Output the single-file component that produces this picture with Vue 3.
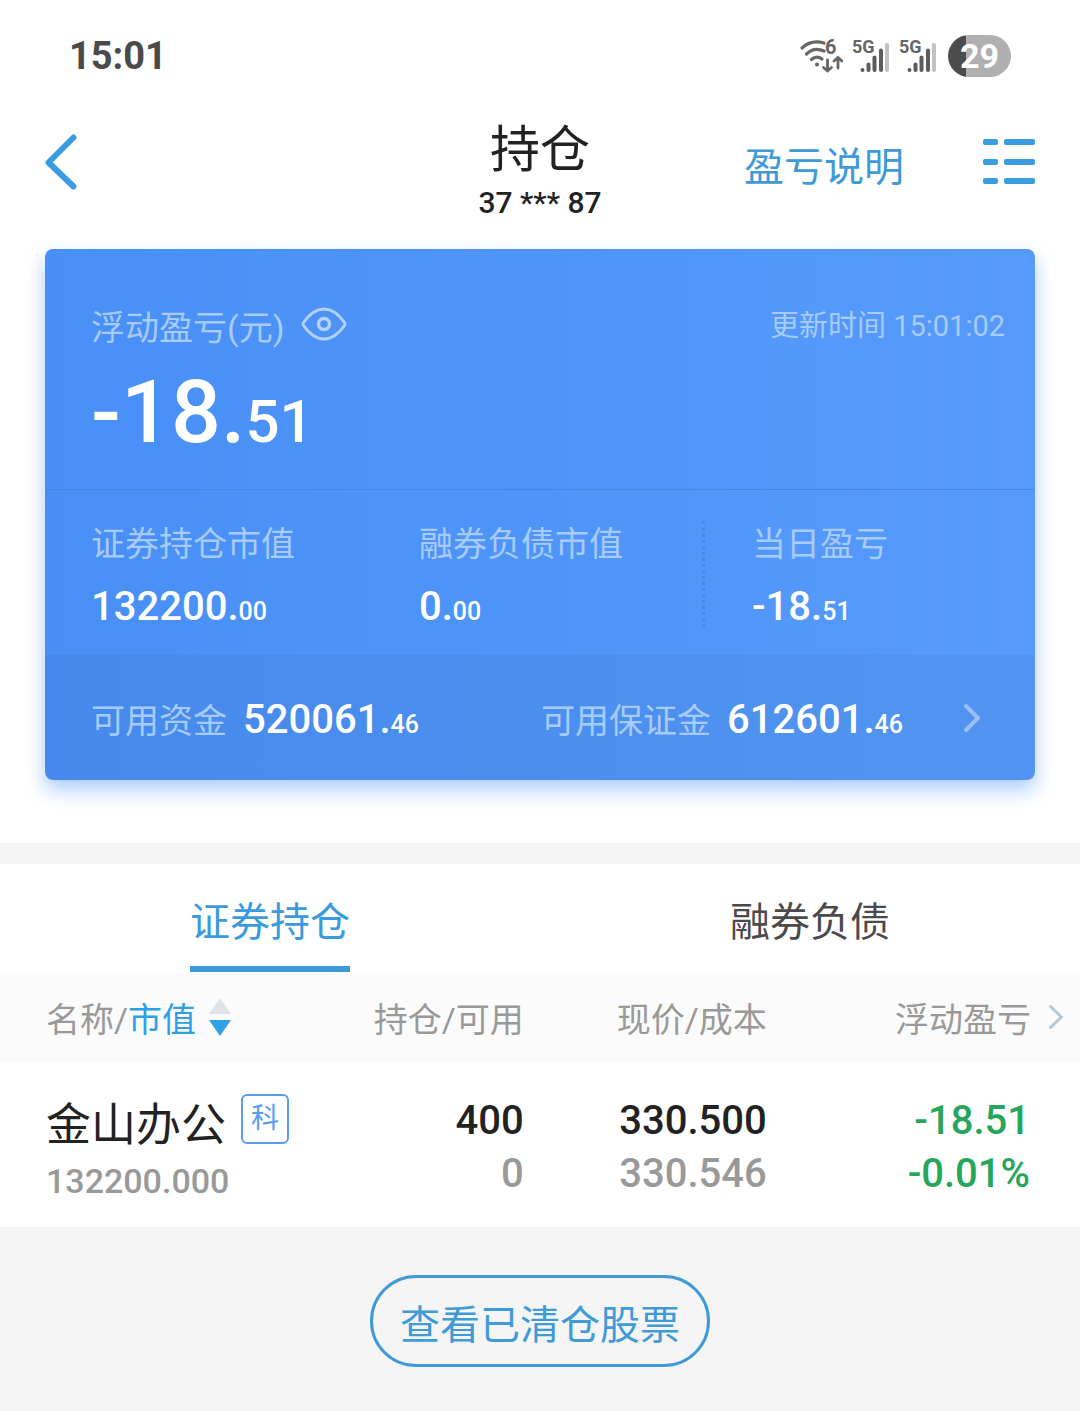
<template>
  <div class="page">
    <!-- Status bar -->
    <div class="status-bar">
      <span class="clock">15:01</span>
      <div class="status-icons">
        <svg viewBox="0 -6 44 50" width="44" height="50" aria-hidden="true">
          <g fill="none" stroke="#666" stroke-width="3.200" stroke-linecap="round">
            <path d="M3 11Q12 2.500 25 6" />
            <path d="M7.500 17Q15 9.500 25 14" />
            <path d="M12.500 22.500Q17.500 18 23 22" />
            <path d="M28.500 23V34M24.500 30.500L28.500 34L32.500 30.500" stroke-width="2.800" />
            <path d="M39 31V20.500M35 24L39 20.500L43 24" stroke-width="2.800" />
          </g>
          <circle cx="18" cy="27.500" r="2" fill="#666" />
          <text x="26" y="17" class="wifi-text">6</text>
        </svg>
        <svg
          v-for="n in 2"
          :key="n"
          viewBox="0 -6 38 48"
          width="38"
          height="48"
          aria-hidden="true"
        >
          <text x="0" y="15" class="signal-text">5G</text>
          <g stroke="#5c5c5c" stroke-width="4" stroke-linecap="round">
            <path d="M10.500 32V32.100M16.500 32V26.500M22.500 32V19.500M29 32V12.500" />
            <path d="M35 32V7" stroke="#c2c2c2" />
          </g>
        </svg>
        <span class="battery">29</span>
      </div>
    </div>

    <!-- Title bar -->
    <header class="title-bar">
      <button type="button" class="icon-button" aria-label="返回">
        <svg viewBox="0 0 32 56" width="32" height="56">
          <path d="M28.500 3.500L3.500 28.500L28.500 52.500" fill="none" stroke="#3a9de0" stroke-width="6" stroke-linecap="round" stroke-linejoin="round" />
        </svg>
      </button>
      <div class="title">
        <h1>持仓</h1>
        <p>37 *** 87</p>
      </div>
      <div class="title-actions">
        <a href="#" class="help-link">盈亏说明</a>
        <button type="button" class="icon-button" aria-label="菜单">
          <svg viewBox="0 0 52 48" width="52" height="48" fill="#3a9de0">
            <g v-for="y in [1, 21, 40]" :key="y">
              <rect x="0" :y="y" width="15" height="6" rx="2" />
              <rect x="21" :y="y" width="31" height="6" rx="2" />
            </g>
          </svg>
        </button>
      </div>
    </header>

    <!-- Summary card -->
    <main class="summary">
      <section class="card">
        <div class="card-top">
          <div class="card-head">
            <span class="label">浮动盈亏(元)</span>
            <button type="button" class="eye" aria-label="隐藏金额">
              <svg viewBox="0 0 46 34" width="46" height="34" fill="none" stroke="#b4d2fd" stroke-width="3">
                <path d="M2.500 15.500C7 9 14 2 23 2S39 9 43.500 15.500Q44.500 17 43.500 18.500C39 25 32 32 23 32S7 25 2.500 18.500Q1.500 17 2.500 15.500Z" />
                <circle cx="23" cy="17" r="5.500" stroke-width="3.500" />
              </svg>
            </button>
            <span class="updated">更新时间 15:01:02</span>
          </div>
          <p class="total">-18.<small>51</small></p>
        </div>

        <dl class="stats">
          <div v-for="s in stats" :key="s.label" class="stat">
            <dt class="label">{{ s.label }}</dt>
            <dd class="amount">{{ s.int }}.<small>{{ s.dec }}</small></dd>
          </div>
        </dl>

        <div class="funds">
          <div v-for="f in funds" :key="f.label" class="fund">
            <span class="label">{{ f.label }}</span>
            <span class="amount">{{ f.int }}.<small>{{ f.dec }}</small></span>
          </div>
          <button type="button" aria-label="查看资金">
            <svg viewBox="0 0 18 30" width="18" height="30">
              <path d="M3 3L15 15L3 27" fill="none" stroke="#98c1f8" stroke-width="4" stroke-linecap="round" stroke-linejoin="round" />
            </svg>
          </button>
        </div>
      </section>
    </main>

    <!-- Tabs -->
    <nav class="tabs">
      <button
        v-for="tab in tabs"
        :key="tab"
        type="button"
        class="tab"
        :class="{ active: tab === activeTab }"
        @click="activeTab = tab"
      >
        <span>{{ tab }}</span>
      </button>
    </nav>

    <!-- Holdings -->
    <table class="holdings">
      <thead>
        <tr>
          <th class="col-name">
            <button type="button" class="sort" @click="sortDesc = !sortDesc">
              <span>名称/<em>市值</em></span>
              <svg viewBox="0 0 24 40" width="24" height="40" aria-hidden="true">
                <path d="M12 1L23 17H1Z" :fill="sortDesc ? '#dfe3e6' : '#2f9fe6'" />
                <path d="M12 39L23 23H1Z" :fill="sortDesc ? '#2f9fe6' : '#dfe3e6'" />
              </svg>
            </button>
          </th>
          <th class="col-qty">持仓/可用</th>
          <th class="col-price">现价/成本</th>
          <th class="col-profit">
            <div class="more">
              <span>浮动盈亏</span>
              <svg viewBox="0 0 16 26" width="16" height="26" aria-hidden="true">
                <path d="M2.500 2.500L13.500 13L2.500 23.500" fill="none" stroke="#b6c8d6" stroke-width="3" stroke-linecap="round" stroke-linejoin="round" />
              </svg>
            </div>
          </th>
        </tr>
      </thead>
      <tbody>
        <tr v-for="h in holdings" :key="h.name">
          <td class="col-name">
            <div class="stock">
              <span class="stock-name">{{ h.name }}</span>
              <span class="tag">{{ h.tag }}</span>
            </div>
            <div class="stock-value">{{ h.value }}</div>
          </td>
          <td class="col-qty">
            <div>{{ h.quantity }}</div>
            <div class="muted">{{ h.available }}</div>
          </td>
          <td class="col-price">
            <div>{{ h.price }}</div>
            <div class="muted">{{ h.cost }}</div>
          </td>
          <td class="col-profit down">
            <div>{{ h.profit }}</div>
            <div>{{ h.rate }}</div>
          </td>
        </tr>
      </tbody>
    </table>

    <div class="footer">
      <button type="button" class="closed-button">查看已清仓股票</button>
    </div>
  </div>
</template>

<script setup>
import { ref } from 'vue'

const tabs = ['证券持仓', '融券负债']
const activeTab = ref('证券持仓')
const sortDesc = ref(true)

// Amounts are split so the decimals can be set smaller
const stats = [
  { label: '证券持仓市值', int: '132200', dec: '00' },
  { label: '融券负债市值', int: '0', dec: '00' },
  { label: '当日盈亏', int: '-18', dec: '51' }
]

const funds = [
  { label: '可用资金', int: '520061', dec: '46' },
  { label: '可用保证金', int: '612601', dec: '46' }
]

const holdings = [
  {
    name: '金山办公',
    tag: '科',
    value: '132200.000',
    quantity: '400',
    available: '0',
    price: '330.500',
    cost: '330.546',
    profit: '-18.51',
    rate: '-0.01%'
  }
]
</script>

<style>
body {
  margin: 0;
  background: #f5f5f5;
}
</style>

<style scoped>
.page {
  min-height: 100vh;
  background: #f5f5f5;
  color: #222;
  font-family: Roboto, "Noto Sans CJK SC", sans-serif;
}
h1,
p,
dl,
dd {
  margin: 0;
}
button {
  padding: 0;
  border: none;
  background: none;
  font: inherit;
  color: inherit;
  cursor: pointer;
}
svg {
  display: block;
}

/* Status bar */
.status-bar {
  display: flex;
  align-items: center;
  justify-content: space-between;
  height: 112px;
  padding: 0 69px;
  background: #fff;
}
.clock {
  font-size: 38px;
  font-weight: 700;
  color: #4a4a4a;
}
.status-icons {
  display: flex;
  align-items: center;
  gap: 9px;
}
.wifi-text {
  font-size: 20px;
  font-weight: 700;
  fill: #666;
}
.signal-text {
  font-size: 18px;
  font-weight: 700;
  fill: #666;
}
.battery {
  width: 63px;
  margin-left: 2px;
  border-radius: 21px;
  background: linear-gradient(90deg, #4c4c4c 28%, #b0b0b0 28%);
  font-size: 34px;
  font-weight: 700;
  line-height: 42px;
  text-align: center;
  color: #fff;
}

/* Title bar */
.title-bar {
  display: grid;
  grid-template-columns: 1fr auto 1fr;
  align-items: center;
  padding: 0 45px 31px;
  background: #fff;
}
.icon-button {
  justify-self: start;
  padding-bottom: 6px;
}
.title {
  text-align: center;
}
.title h1 {
  font-size: 50px;
  font-weight: 400;
  line-height: 76px;
}
.title p {
  font-size: 30px;
  font-weight: 500;
  line-height: 30px;
}
.title-actions {
  display: flex;
  align-items: center;
  justify-content: flex-end;
  gap: 79px;
}
.help-link {
  padding-top: 6px;
  font-size: 40px;
  line-height: 56px;
  color: #3f9ad8;
  text-decoration: none;
}

/* Summary card */
.summary {
  padding: 0 45px 63px;
  background: #fff;
}
.card {
  border-radius: 8px;
  background: linear-gradient(90deg, #488ff6, #569bfb);
  box-shadow: 0 10px 20px rgba(72, 143, 250, 0.45);
  color: #fff;
}
.label {
  font-size: 34px;
  line-height: 48px;
  color: #a8cbfd;
}
.card-top {
  height: 241px;
  padding: 52px 30px 0 46px;
  border-bottom: 1px solid #4587e6;
  box-sizing: border-box;
}
.card-head {
  display: flex;
  align-items: flex-start;
}
.card-head .label {
  line-height: 54px;
}
.eye {
  margin: 6px 0 0 17px;
}
.updated {
  margin-left: auto;
  font-size: 29px;
  line-height: 50px;
  color: #a8cbfd;
}
.total {
  font-size: 88px;
  font-weight: 500;
  line-height: 114px;
}
.total small {
  font-size: 60px;
  line-height: 1;
}
.amount {
  font-size: 40px;
  font-weight: 500;
  line-height: 40px;
}
.amount small {
  font-size: 25px;
  line-height: 1;
}
.stats {
  display: grid;
  grid-template-columns: 328fr 283fr 333fr;
  padding: 31px 0 28px 46px;
}
.stat {
  display: flex;
  flex-direction: column;
  gap: 20px;
}
.stat .label {
  line-height: 46px;
}
.stat:last-child {
  padding-left: 47px;
  border-left: 3px dotted #478aec;
}
.funds {
  display: grid;
  grid-template-columns: 450fr 422fr auto;
  align-items: center;
  height: 125px;
  padding: 0 54px 0 46px;
  border-radius: 0 0 8px 8px;
  background: rgba(0, 0, 0, 0.04);
}
.fund {
  display: flex;
  align-items: baseline;
  gap: 16px;
  padding-top: 6px;
}

/* Tabs */
.tabs {
  display: flex;
  border-top: 21px solid #f5f5f5;
  background: #fff;
}
.tab {
  flex: 1;
  font-size: 40px;
  color: #4a4a4a;
}
.tab span {
  display: block;
  width: max-content;
  height: 102px;
  margin: 0 auto;
  border-bottom: 6px solid transparent;
  line-height: 118px;
}
.tab.active {
  color: #3a9bdc;
}
.tab.active span {
  border-color: #3a9bdc;
}

/* Holdings */
.holdings {
  width: 100%;
  border-collapse: collapse;
  table-layout: fixed;
  background: #fff;
}
.holdings th {
  height: 90px;
  padding: 0;
  background: #fbfbfb;
  font-size: 34px;
  font-weight: 400;
  text-align: right;
  color: #999;
}
.holdings td {
  padding: 32px 0 23px;
  font-size: 40px;
  font-weight: 500;
  line-height: 53px;
  text-align: right;
  vertical-align: top;
}
.holdings .col-name {
  width: 30.5%;
  padding-left: 46px;
  box-sizing: border-box;
  text-align: left;
}
.col-qty {
  width: 18%;
}
.col-price {
  width: 22.5%;
}
.holdings td.col-profit {
  padding-right: 50px;
}
.sort {
  display: flex;
  align-items: center;
  gap: 12px;
}
.sort em {
  font-style: normal;
  color: #2f9fe6;
}
.more {
  display: flex;
  align-items: center;
  justify-content: flex-end;
  gap: 17px;
  padding-right: 16px;
}
.stock {
  display: flex;
  align-items: flex-start;
  gap: 15px;
}
.stock-name {
  font-size: 45px;
  font-weight: 400;
  line-height: 64px;
  white-space: nowrap;
}
.tag {
  flex: none;
  padding: 0 8px;
  border: 2px solid #5a9cf0;
  border-radius: 6px;
  font-size: 28px;
  font-weight: 400;
  line-height: 46px;
  color: #5a9cf0;
}
.stock-value {
  font-size: 34px;
  line-height: 46px;
  color: #999;
}
.muted {
  color: #999;
}
.down {
  color: #26a65b;
}

.footer {
  padding: 48px 0;
  text-align: center;
}
.closed-button {
  padding: 10px 27px 0;
  border: 3px solid #3f9ad8;
  border-radius: 46px;
  font-size: 40px;
  line-height: 76px;
  color: #3f9ad8;
}
</style>
